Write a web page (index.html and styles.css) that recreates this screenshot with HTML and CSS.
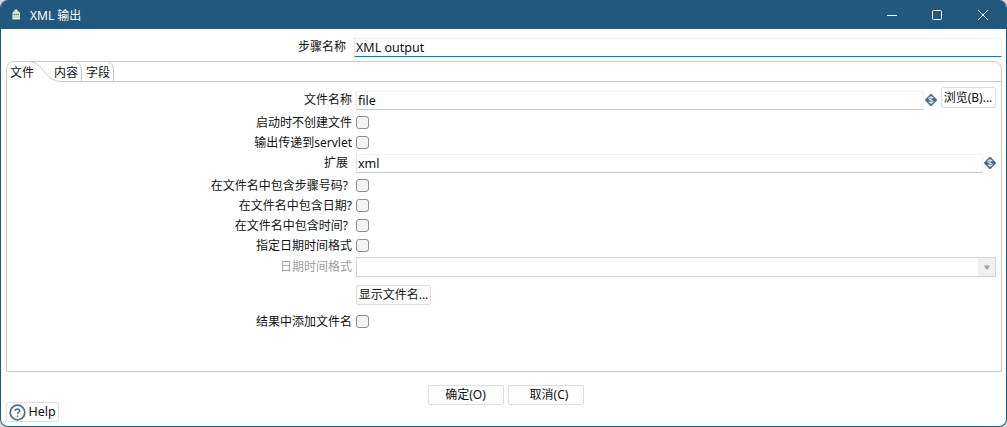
FILE: index.html
```html
<!DOCTYPE html>
<html lang="zh-CN">
<head>
<meta charset="utf-8">
<title>XML 输出</title>
<link rel="stylesheet" href="styles.css">
</head>
<body>
<div class="window">
  <header class="titlebar">
    <svg class="app-icon" width="10" height="12" viewBox="0 0 10 12"><path d="M3.500 .5h3v2H8l1 1.500v6.500H1.500V4l.8-1.500h1.200z" fill="#d9efda"/><path d="M2.500 5.500h5.500" stroke="#5f8980" stroke-width="1.400" stroke-dasharray="1.500 .5"/><path d="M1.500 8H9" stroke="#b5d2bd"/></svg>
    <h1 class="title">XML 输出</h1>
    <svg class="controls" width="104" height="12" viewBox="0 0 104 12" fill="none" stroke="#fff"><path d="M1 6.5h10"/><rect x="46.5" y="1.5" width="9" height="9" rx="1"/><path d="M92 1l10 10M102 1L92 11"/></svg>
  </header>
  <main class="content">
    <div class="step-row">
      <label class="step-label">步骤名称</label>
      <div class="field focused">XML output</div>
    </div>
    <section class="panel">
      <nav class="tabs">
        <svg class="tab-lines" width="996" height="21" viewBox="0 0 996 21" fill="none" stroke="#c9c9c9"><path d="M22 .5C39 1.500 37 20.500 57 20.500H996M70 .5Q75.500 3 75.500 9V20M102 .5Q107.500 3 107.500 9V20"/></svg>
        <span class="tab tab-file">文件</span><span class="tab tab-content">内容</span><span class="tab">字段</span>
      </nav>
      <div class="form">
        <div class="row row-first"><label>文件名称</label><div class="field">file</div><svg class="variable" width="12" height="12" viewBox="0 0 12 12"><path d="M6 1.200L10.800 6 6 10.800 1.200 6z" fill="#496e8c" stroke="#496e8c" stroke-width="2.400" stroke-linejoin="round"/><path d="M8.200 4.200C7.400 2.700 3.800 2.800 3.800 4.500S8.200 5.800 8.200 7.500 4.600 9.300 3.800 7.800M6 2v8" fill="none" stroke="#d1e0ea" stroke-width="1.100"/></svg><button class="button browse"><span>浏览(B)...</span></button></div>
        <div class="row"><label>启动时不创建文件</label><i class="check"></i></div>
        <div class="row"><label>输出传递到servlet</label><i class="check"></i></div>
        <div class="row row-extension"><label class="inset">扩展</label><div class="field">xml</div><svg class="variable" width="12" height="12" viewBox="0 0 12 12"><path d="M6 1.200L10.800 6 6 10.800 1.200 6z" fill="#496e8c" stroke="#496e8c" stroke-width="2.400" stroke-linejoin="round"/><path d="M8.200 4.200C7.400 2.700 3.800 2.800 3.800 4.500S8.200 5.800 8.200 7.500 4.600 9.300 3.800 7.800M6 2v8" fill="none" stroke="#d1e0ea" stroke-width="1.100"/></svg></div>
        <div class="row"><label class="inset">在文件名中包含步骤号码?</label><i class="check"></i></div>
        <div class="row"><label>在文件名中包含日期?</label><i class="check"></i></div>
        <div class="row"><label class="inset">在文件名中包含时间?</label><i class="check"></i></div>
        <div class="row"><label>指定日期时间格式</label><i class="check"></i></div>
        <div class="row row-format"><label class="disabled">日期时间格式</label><div class="combo"><span class="arrow"><svg width="6" height="5" viewBox="0 0 6 5"><path d="M0 .5h6L3.800 4.500H2.200z" fill="#a3a3a3"/></svg></span></div></div>
        <div class="row row-show"><label></label><button class="button show"><span>显示文件名...</span></button></div>
        <div class="row"><label>结果中添加文件名</label><i class="check"></i></div>
      </div>
    </section>
    <footer class="footer">
      <button class="button help"><svg width="17" height="17" viewBox="0 0 17 17" fill="none" stroke="#496f8d"><circle cx="8.500" cy="8.500" r="7.300" stroke-width="1.700"/><path d="M6.300 7C6.300 4.400 10.700 4.400 10.700 7 10.700 8.500 8.500 8.400 8.500 10.100M8.500 11.400v1.500" stroke-width="1.500"/></svg><span>Help</span></button>
      <div class="actions"><button class="button action"><span>确定(O)</span></button><button class="button action cancel"><span>取消(C)</span></button></div>
    </footer>
  </main>
</div>
</body>
</html>
```
FILE: styles.css
```css
* { box-sizing: border-box; }
body {
  margin: 0;
  background: #d6dadd;
  color: #111;
  font: 12px/20px "Noto Sans", "Noto Sans CJK SC", sans-serif;
}
.window {
  width: 1007px;
  height: 427px;
  overflow: hidden;
  display: flex;
  flex-direction: column;
  border: 1px solid #22577e;
  border-top: 0;
  border-radius: 8px;
  background: #fff;
}
.titlebar {
  flex: 0 0 29px;
  display: flex;
  align-items: center;
  padding: 0 16px 0 10px;
  background: #22577e;
  color: #fff;
}
.title { margin: 0 auto 0 9px; padding-top: 2px; font: inherit; }
.content {
  flex: 1;
  display: flex;
  flex-direction: column;
  padding: 9px 4px 4px 5px;
}
.step-row { display: flex; height: 19px; }
.step-label { width: 340px; text-align: right; line-height: 18px; }
.field {
  flex: 1;
  height: 19px;
  padding-left: 1px;
  border: 1px solid #f1f1f1;
  border-left-color: #e5e5e5;
  border-bottom-color: #c5c5c5;
  line-height: 18px;
  font-size: 12.5px;
}
.step-row .field { margin-left: 8px; }
.step-row .focused { border-bottom: 1px solid #1677bd; line-height: 18px; }
.panel {
  height: 311px;
  margin-top: 4px;
  border: 1px solid #c9c9c9;
  border-radius: 8px 8px 0 0;
}
.tabs {
  position: relative;
  display: flex;
  height: 20px;
  padding-left: 3px;
}
.tab-lines { position: absolute; left: -1px; top: -1px; }
.tab { position: relative; line-height: 22px; }
.tab:last-child { margin-left: 8px; }
.tab-content { margin-left: 20px; }
.form { padding: 8px 5px 0 0; }
.row { display: flex; align-items: center; height: 20px; }
.row label { width: 345px; margin-right: 4px; padding-top: 1px; text-align: right; white-space: nowrap; }
.row label.inset { padding-right: 4px; }
.row-first { height: 22px; align-items: flex-start; }
.row-first label { line-height: 19px; padding-top: 0; }
.row-first .field { margin-top: 1px; }
.row-first .variable { margin: 4px 4px 0 1px; }
.row-extension { height: 23px; align-items: flex-start; }
.row-extension label { line-height: 20px; }
.row-extension .field { margin-top: 2px; }
.row-extension .variable { margin: 5px 0 0 1px; }
.check {
  width: 13px;
  height: 13px;
  border: 1px solid #8c8c8c;
  border-radius: 3px;
  background: #f3f3f3;
}
.button {
  display: flex;
  align-items: center;
  justify-content: center;
  height: 20px;
  padding: 0;
  border: 1px solid #dedede;
  border-radius: 2px;
  background: #fdfdfd;
  color: #111;
  font: inherit;
  white-space: nowrap;
}
.browse { height: 21px; width: 55px; margin-top: -3px; padding: 1px 1px 0 0; }
.row-format { height: 24px; }
.disabled { color: #a0a0a0; }
.row-format label { margin-top: -2px; }
.combo {
  flex: 1;
  height: 20px;
  border: 1px solid #d2d2d2;
  display: flex;
  justify-content: flex-end;
}
.arrow {
  width: 17px;
  display: flex;
  align-items: center;
  justify-content: center;
  background: #f0f0f0;
}
.row-show { height: 32px; }
.show { width: 75px; }
.footer {
  height: 50px;
  display: grid;
  grid-template-columns: 422px auto 1fr;
  align-items: start;
}
.actions { display: flex; gap: 4px; padding-top: 13px; }
.action { width: 76px; padding-right: 1px; }
.cancel { padding-left: 7px; }
.help { width: 53px; gap: 2px; align-self: end; font-size: 12.5px; }
```
